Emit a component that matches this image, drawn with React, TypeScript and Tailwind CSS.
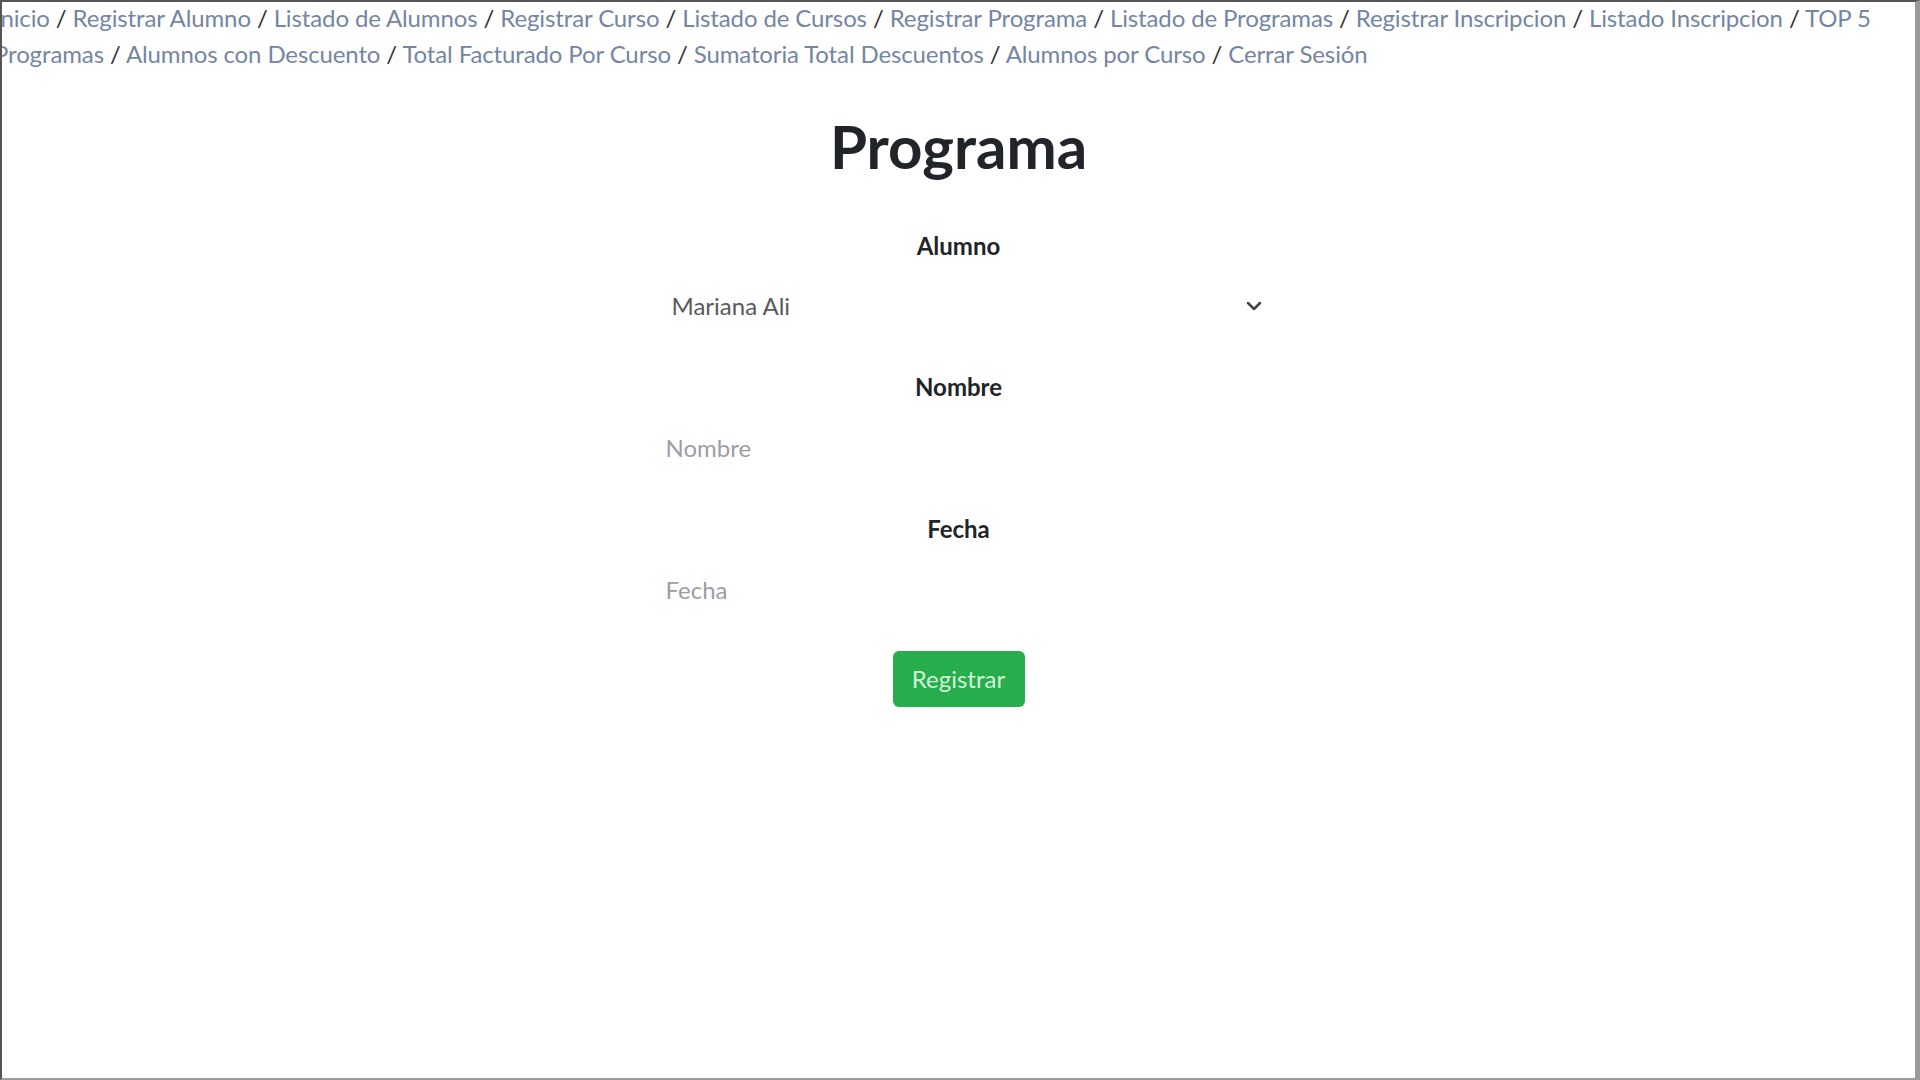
import React from 'react';

const lineOne = [
  'Inicio',
  'Registrar Alumno',
  'Listado de Alumnos',
  'Registrar Curso',
  'Listado de Cursos',
  'Registrar Programa',
  'Listado de Programas',
  'Registrar Inscripcion',
  'Listado Inscripcion',
];

const lineTwo = [
  'Alumnos con Descuento',
  'Total Facturado Por Curso',
  'Sumatoria Total Descuentos',
  'Alumnos por Curso',
  'Cerrar Sesión',
];

const Sep = () => <span className="text-[#333]"> / </span>;

const Field = ({ label, children }: { label: string; children: React.ReactNode }) => (
  <div className="flex flex-col items-stretch">
    <label className="text-center text-[24px] leading-[36px] font-bold text-[#212529] mb-[14px]">{label}</label>
    {children}
  </div>
);

const App = () => {
  return (
    <div className="h-screen w-full overflow-hidden bg-white border-t-2 border-l-2 border-t-[#555] border-l-[#555] border-r-[5px] border-r-[#9a9a9a] border-b-2 border-b-[#9a9a9a] font-['Lato','Open_Sans',sans-serif]">
      <nav className="-ml-[8px] -mt-[2px] text-[24px] leading-[36px] tracking-[-0.12px] whitespace-nowrap">
        <div>
          {lineOne.map((l) => (
            <React.Fragment key={l}>
              <a href="#" className="text-[#7486a3]">{l}</a>
              <Sep />
            </React.Fragment>
          ))}
          <a href="#" className="text-[#7486a3]">TOP 5</a>
        </div>
        <div>
          <a href="#" className="text-[#7486a3]">Programas</a>
          {lineTwo.map((l) => (
            <React.Fragment key={l}>
              <Sep />
              <a href="#" className="text-[#7486a3]">{l}</a>
            </React.Fragment>
          ))}
        </div>
      </nav>

      <main className="flex flex-col items-center">
        <h1 className="mt-[38px] text-[60px] leading-[72px] font-bold text-[#212529]">Programa</h1>

        <form className="w-[640px] mt-[46px] flex flex-col" onSubmit={(e) => e.preventDefault()}>
          <Field label="Alumno">
            <div className="relative h-[56px] flex items-center">
              <span className="pl-[33px] text-[24px] text-[#5a5a5a]">Mariana Ali</span>
              <svg className="absolute right-[16px] top-1/2 -translate-y-1/2" width="18" height="12" viewBox="0 0 16 12">
                <path d="M2 3l6 6 6-6" fill="none" stroke="#444" strokeWidth="2.5" strokeLinecap="round" strokeLinejoin="round" />
              </svg>
            </div>
          </Field>

          <div className="mt-[35px]">
            <Field label="Nombre">
              <input
                placeholder="Nombre"
                className="h-[56px] pl-[27px] text-[24px] outline-none bg-transparent placeholder:text-[#a09ca6]"
              />
            </Field>
          </div>

          <div className="mt-[36px]">
            <Field label="Fecha">
              <input
                placeholder="Fecha"
                className="h-[56px] pl-[27px] text-[24px] outline-none bg-transparent placeholder:text-[#a09ca6]"
              />
            </Field>
          </div>

          <div className="mt-[34px] flex justify-center">
            <button type="submit" className="w-[132px] h-[56px] rounded-[6px] bg-[#26ad4c] text-[24px] text-[#d2f3d8]">
              Registrar
            </button>
          </div>
        </form>
      </main>
    </div>
  );
};

export default App;
